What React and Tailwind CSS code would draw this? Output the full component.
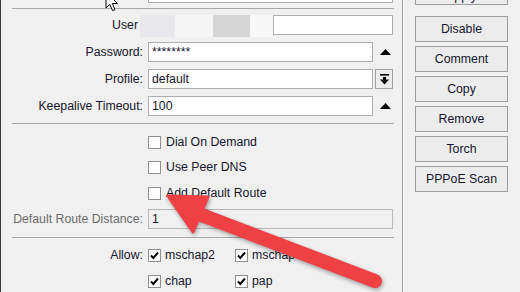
import React from "react";

function Label({ children, gray }) {
  return (
    <div className={"w-[142px] shrink-0 text-right whitespace-nowrap " + (gray ? "text-[#6d6d6d]" : "")}>
      {children}
    </div>
  );
}

function Input({ w, value, disabled }) {
  return (
    <div
      className={
        "h-[20px] shrink-0 border flex items-center pl-[3px] " +
        (disabled ? "bg-[#f0f0f0] border-[#b9b9b9]" : "bg-white border-[#abadb3]")
      }
      style={{ width: w }}
    >
      {value}
    </div>
  );
}

function UpTri() {
  return (
    <svg width="11" height="6" viewBox="0 0 11 6" className="shrink-0">
      <polygon points="0,6 11,6 5.5,0" fill="#000" />
    </svg>
  );
}

function Box({ checked }) {
  return (
    <div className="w-[13px] h-[13px] shrink-0 bg-white border border-[#8e8f8f] flex items-center justify-center">
      {checked && (
        <svg width="11" height="11" viewBox="0 0 11 11">
          <path d="M2 5.5 L4.3 8 L9 2.5" stroke="#000" strokeWidth="2" fill="none" />
        </svg>
      )}
    </div>
  );
}

function Btn({ children, className = "" }) {
  return (
    <div
      className={
        "w-[93px] h-[26px] shrink-0 border border-[#9c9c9c] bg-[#ececec] flex items-center justify-center " +
        className
      }
    >
      {children}
    </div>
  );
}

export default function App() {
  return (
    <div className="w-[520px] h-[292px] overflow-hidden relative bg-[#f0f0f0] flex border-l border-[#3a3a3a] text-[12.3px] leading-[14px] text-[#16162c] font-['Liberation_Sans',Arial,sans-serif]">
      {/* left panel */}
      <div className="w-[401px] shrink-0 flex flex-col">
        <div className="h-[3px] flex">
          <div className="ml-[147px] w-[245px] h-[3px] bg-white border-x border-b border-[#abadb3]" />
        </div>
        <div className="mt-[5px] ml-[11px] w-[382px] h-px bg-[#a7a7a7]" />

        {/* User */}
        <div className="mt-[6px] h-[20px] flex items-start">
          <div className="w-[139px] shrink-0 text-right pr-[2px] h-[20px] flex items-center justify-end">User</div>
          <div className="flex h-[22px]">
            <div className="w-[35px] bg-[#e7e7ec]" />
            <div className="w-[38px] bg-[#f5f5f5]" />
            <div className="w-[37px] bg-[#d6d6d6]" />
            <div className="w-[23px] bg-[#f7f7f7]" />
          </div>
          <div className="w-[120px] h-[20px] bg-white border border-[#abadb3]" />
        </div>

        {/* Password */}
        <div className="mt-[7px] h-[20px] flex items-center">
          <Label>Password:</Label>
          <div className="ml-[5px]">
            <Input w="225px" value="********" />
          </div>
          <div className="ml-[7px] flex items-center">
            <UpTri />
          </div>
        </div>

        {/* Profile */}
        <div className="mt-[7px] h-[20px] flex items-center">
          <Label>Profile:</Label>
          <div className="ml-[5px]">
            <Input w="225px" value="default" />
          </div>
          <div className="ml-[2px] w-[18px] h-[20px] border border-[#a0a0a0] bg-[#ececec] flex items-center justify-center">
            <svg width="9" height="11" viewBox="0 0 9 11">
              <rect x="0" y="0" width="9" height="1.6" fill="#000" />
              <rect x="3" y="3" width="3" height="3" fill="#000" />
              <polygon points="0,5.5 9,5.5 4.5,10.5" fill="#000" />
            </svg>
          </div>
        </div>

        {/* Keepalive */}
        <div className="mt-[7px] h-[20px] flex items-center">
          <Label>Keepalive Timeout:</Label>
          <div className="ml-[5px]">
            <Input w="225px" value="100" />
          </div>
          <div className="ml-[7px] flex items-center">
            <UpTri />
          </div>
        </div>

        <div className="mt-[7px] ml-[11px] w-[382px] h-px bg-[#a7a7a7]" />

        {/* checkboxes */}
        <div className="mt-[8px] h-[20px] flex items-center pl-[147px] gap-[5px]">
          <Box />
          <span>Dial On Demand</span>
        </div>
        <div className="mt-[5px] h-[20px] flex items-center pl-[147px] gap-[5px]">
          <Box />
          <span>Use Peer DNS</span>
        </div>
        <div className="mt-[6px] h-[20px] flex items-center pl-[147px] gap-[5px]">
          <Box />
          <span>Add Default Route</span>
        </div>

        {/* Default route distance */}
        <div className="mt-[6px] h-[20px] flex items-center">
          <Label gray>Default Route Distance:</Label>
          <div className="ml-[5px]">
            <Input w="245px" value="1" disabled />
          </div>
        </div>

        <div className="mt-[8px] ml-[11px] w-[382px] h-px bg-[#a7a7a7]" />

        {/* Allow */}
        <div className="mt-[7px] h-[20px] flex items-center">
          <Label>Allow:</Label>
          <div className="ml-[5px] w-[87px] flex items-center gap-[4px]">
            <Box checked />
            <span>mschap2</span>
          </div>
          <div className="flex items-center gap-[4px]">
            <Box checked />
            <span>mschap</span>
          </div>
        </div>
        <div className="mt-[6px] h-[20px] flex items-center">
          <Label />
          <div className="ml-[5px] w-[87px] flex items-center gap-[4px]">
            <Box checked />
            <span>chap</span>
          </div>
          <div className="flex items-center gap-[4px]">
            <Box checked />
            <span>pap</span>
          </div>
        </div>
      </div>

      {/* divider */}
      <div className="w-px shrink-0 bg-[#a0a0a0]" />
      <div className="w-px shrink-0 bg-[#fbfbfb]" />

      {/* right panel */}
      <div className="flex flex-col pl-[11px]">
        <Btn className="-mt-[21px] items-end pb-[1px]">Apply</Btn>
        <Btn className="mt-[11px]">Disable</Btn>
        <Btn className="mt-[4px]">Comment</Btn>
        <Btn className="mt-[4px]">Copy</Btn>
        <Btn className="mt-[4px]">Remove</Btn>
        <Btn className="mt-[4px]">Torch</Btn>
        <Btn className="mt-[4px]">PPPoE Scan</Btn>
      </div>

      {/* mouse cursor */}
      <svg
        className="absolute left-[104px] top-[-9px] pointer-events-none"
        width="14"
        height="22"
        viewBox="0 0 14 22"
      >
        <path
          d="M1 1 L1 17 L4.8 13.4 L7.6 19.6 L10 18.6 L7.3 12.5 L12.4 12.5 Z"
          fill="#fff"
          stroke="#000"
          strokeWidth="1"
          strokeLinejoin="miter"
        />
      </svg>

      {/* red arrow */}
      <svg
        className="absolute inset-0 pointer-events-none drop-shadow-[1px_2px_2px_rgba(0,0,0,0.35)]"
        width="520"
        height="292"
        viewBox="0 0 520 292"
      >
        <line x1="198" y1="214" x2="374" y2="281" stroke="#ef4044" strokeWidth="14" strokeLinecap="round" />
        <polygon points="167,196 207,197 192,232" fill="#ef4044" stroke="#ef4044" strokeWidth="3" strokeLinejoin="round" />
      </svg>
    </div>
  );
}
